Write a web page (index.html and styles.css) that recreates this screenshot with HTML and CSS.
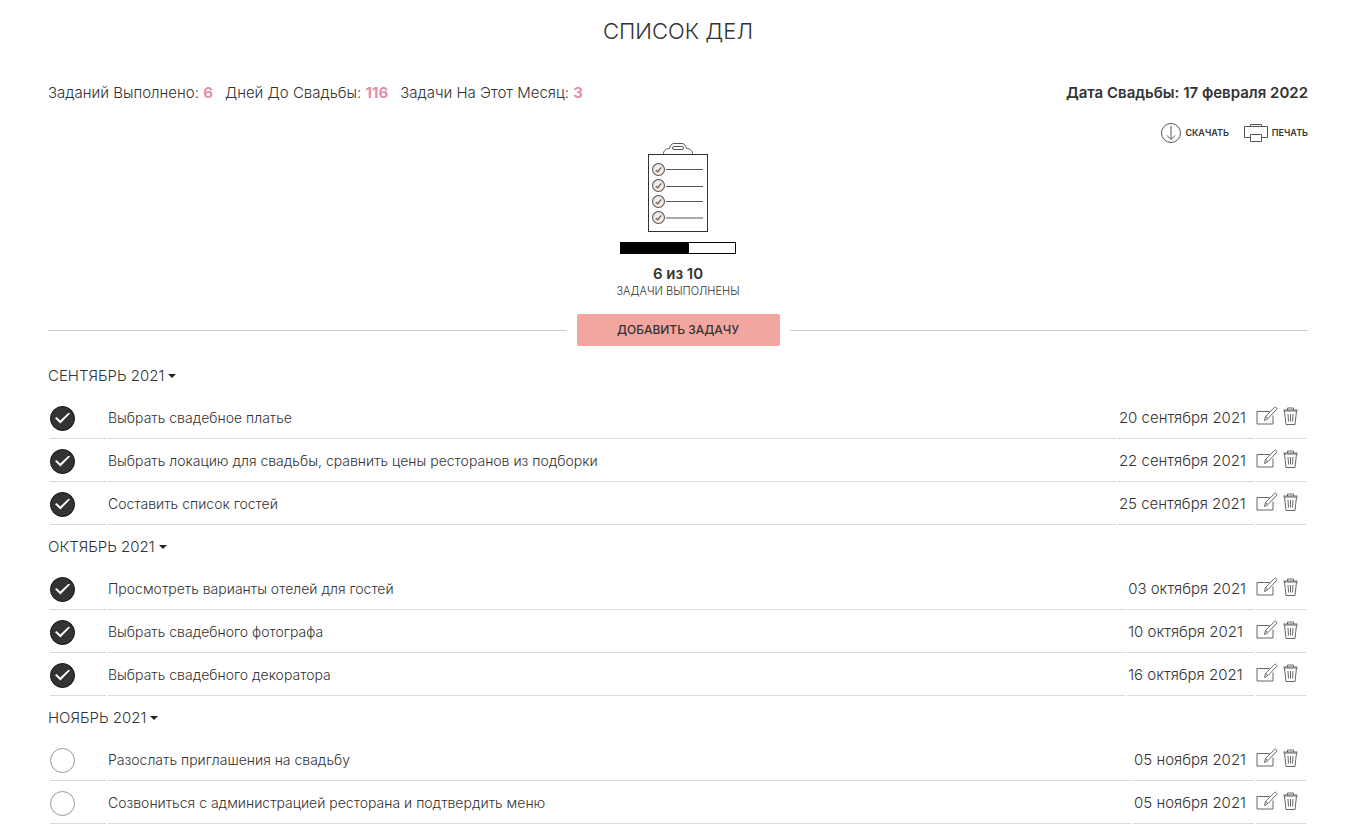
FILE: index.html
```html
<!DOCTYPE html>
<html lang="ru">
<head>
    <meta charset="UTF-8">
    <meta name="viewport" content="width=device-width, initial-scale=1.0">
    <title>Список дел</title>
    <link rel="stylesheet" href="styles.css">
</head>
<body>
    <!-- Shared icons -->
    <svg class="sprite" aria-hidden="true">
        <symbol id="icon-edit" viewBox="0 0 22 20">
            <path d="M13.500 5.500H1v12.500h16V9.500M8.500 14.500l1-4L18 1.800c.7-.7 1.700-.7 2.300-.1s.5 1.500-.1 2.200L12 12.500zM9.500 10.500l2.500 2"/>
        </symbol>
        <symbol id="icon-trash" viewBox="0 0 15 18">
            <path d="M.5 4h14M.5 3h14M4.500 3V1h6v2M1.500 4l1.500 13.500h9L13.500 4M5 7l.5 7.500M7.500 7v7.500M10 7l-.5 7.500"/>
        </symbol>
        <symbol id="icon-item" viewBox="0 0 12 12">
            <circle cx="6" cy="6" r="5.500"/>
            <path d="M3.500 6.500l1.700 1.700 3.300-4.200"/>
        </symbol>
    </svg>

    <div class="page">
        <h1>СПИСОК ДЕЛ</h1>

        <div class="summary">
            <div class="stats">
                <span>Заданий Выполнено: <b>6</b></span>
                <span>Дней До Свадьбы: <b>116</b></span>
                <span>Задачи На Этот Месяц: <b>3</b></span>
            </div>
            <div class="wedding">
                <div class="wedding-date">Дата Свадьбы: 17 февраля 2022</div>
                <div class="links">
                    <a href="#">
                        <svg width="20" height="20" viewBox="0 0 20 20"><circle cx="10" cy="10" r="9.500"/><path d="M10 3v13M6 12.500l4 4 4-4"/></svg>
                        СКАЧАТЬ
                    </a>
                    <a href="#">
                        <svg width="24" height="20" viewBox="0 0 24 20"><path d="M6.500 14.500h-6v-11h23v11h-6M6.500 3.500v-2h11v2M6.500 11.500h11v7h-11z"/></svg>
                        ПЕЧАТЬ
                    </a>
                </div>
            </div>
        </div>

        <div class="progress-block">
            <svg class="clipboard" width="60" height="90" viewBox="0 0 60 90">
                <path d="M15.500 11c0-4 3-5.500 6-5.500C22 2.500 24 .5 26 .5h8c2 0 4 2 4.500 5 3 0 6 1.500 6 5.500"/>
                <rect x="24.500" y="3.500" width="11" height="3" rx="1.500"/>
                <rect class="sheet" x=".5" y="11.500" width="59" height="77"/>
                <path class="lines" d="M18 26.500h37M18 43.500h37M18 58.500h37M18 75h37"/>
                <g class="items">
                    <use href="#icon-item" x="4" y="20" width="13" height="13"/>
                    <use href="#icon-item" x="4" y="36" width="13" height="13"/>
                    <use href="#icon-item" x="4" y="52" width="13" height="13"/>
                    <use href="#icon-item" x="4" y="68" width="13" height="13"/>
                </g>
            </svg>
            <div class="bar"><div class="bar-fill" style="width: 60%"></div></div>
            <div class="count">6 из 10</div>
            <div class="caption">ЗАДАЧИ ВЫПОЛНЕНЫ</div>
        </div>

        <div class="add-row">
            <button class="add-button" type="button">ДОБАВИТЬ ЗАДАЧУ</button>
        </div>

        <section>
            <h2><button class="month" type="button">СЕНТЯБРЬ 2021</button></h2>
            <table>
                <tr>
                    <td class="check"><input type="checkbox" id="t1" checked></td>
                    <td class="task"><label for="t1">Выбрать свадебное платье</label></td>
                    <td class="date">20 сентября 2021</td>
                    <td class="tools">
                        <div>
                            <button type="button" aria-label="Изменить"><svg width="22" height="20"><use href="#icon-edit"/></svg></button>
                            <button type="button" aria-label="Удалить"><svg width="15" height="18"><use href="#icon-trash"/></svg></button>
                        </div>
                    </td>
                </tr>
                <tr>
                    <td class="check"><input type="checkbox" id="t2" checked></td>
                    <td class="task"><label for="t2">Выбрать локацию для свадьбы, сравнить цены ресторанов из подборки</label></td>
                    <td class="date">22 сентября 2021</td>
                    <td class="tools">
                        <div>
                            <button type="button" aria-label="Изменить"><svg width="22" height="20"><use href="#icon-edit"/></svg></button>
                            <button type="button" aria-label="Удалить"><svg width="15" height="18"><use href="#icon-trash"/></svg></button>
                        </div>
                    </td>
                </tr>
                <tr>
                    <td class="check"><input type="checkbox" id="t3" checked></td>
                    <td class="task"><label for="t3">Составить список гостей</label></td>
                    <td class="date">25 сентября 2021</td>
                    <td class="tools">
                        <div>
                            <button type="button" aria-label="Изменить"><svg width="22" height="20"><use href="#icon-edit"/></svg></button>
                            <button type="button" aria-label="Удалить"><svg width="15" height="18"><use href="#icon-trash"/></svg></button>
                        </div>
                    </td>
                </tr>
            </table>
        </section>

        <section>
            <h2><button class="month" type="button">ОКТЯБРЬ 2021</button></h2>
            <table>
                <tr>
                    <td class="check"><input type="checkbox" id="t4" checked></td>
                    <td class="task"><label for="t4">Просмотреть варианты отелей для гостей</label></td>
                    <td class="date">03 октября 2021</td>
                    <td class="tools">
                        <div>
                            <button type="button" aria-label="Изменить"><svg width="22" height="20"><use href="#icon-edit"/></svg></button>
                            <button type="button" aria-label="Удалить"><svg width="15" height="18"><use href="#icon-trash"/></svg></button>
                        </div>
                    </td>
                </tr>
                <tr>
                    <td class="check"><input type="checkbox" id="t5" checked></td>
                    <td class="task"><label for="t5">Выбрать свадебного фотографа</label></td>
                    <td class="date">10 октября 2021</td>
                    <td class="tools">
                        <div>
                            <button type="button" aria-label="Изменить"><svg width="22" height="20"><use href="#icon-edit"/></svg></button>
                            <button type="button" aria-label="Удалить"><svg width="15" height="18"><use href="#icon-trash"/></svg></button>
                        </div>
                    </td>
                </tr>
                <tr>
                    <td class="check"><input type="checkbox" id="t6" checked></td>
                    <td class="task"><label for="t6">Выбрать свадебного декоратора</label></td>
                    <td class="date">16 октября 2021</td>
                    <td class="tools">
                        <div>
                            <button type="button" aria-label="Изменить"><svg width="22" height="20"><use href="#icon-edit"/></svg></button>
                            <button type="button" aria-label="Удалить"><svg width="15" height="18"><use href="#icon-trash"/></svg></button>
                        </div>
                    </td>
                </tr>
            </table>
        </section>

        <section>
            <h2><button class="month" type="button">НОЯБРЬ 2021</button></h2>
            <table>
                <tr>
                    <td class="check"><input type="checkbox" id="t7"></td>
                    <td class="task"><label for="t7">Разослать приглашения на свадьбу</label></td>
                    <td class="date">05 ноября 2021</td>
                    <td class="tools">
                        <div>
                            <button type="button" aria-label="Изменить"><svg width="22" height="20"><use href="#icon-edit"/></svg></button>
                            <button type="button" aria-label="Удалить"><svg width="15" height="18"><use href="#icon-trash"/></svg></button>
                        </div>
                    </td>
                </tr>
                <tr>
                    <td class="check"><input type="checkbox" id="t8"></td>
                    <td class="task"><label for="t8">Созвониться с администрацией ресторана и подтвердить меню</label></td>
                    <td class="date">05 ноября 2021</td>
                    <td class="tools">
                        <div>
                            <button type="button" aria-label="Изменить"><svg width="22" height="20"><use href="#icon-edit"/></svg></button>
                            <button type="button" aria-label="Удалить"><svg width="15" height="18"><use href="#icon-trash"/></svg></button>
                        </div>
                    </td>
                </tr>
            </table>
        </section>
    </div>
</body>
</html>
```
FILE: styles.css
```css
* {
    box-sizing: border-box;
}

body {
    margin: 0;
    background: white;
    color: #333;
    font-family: Inter, "Open Sans", sans-serif;
    font-size: 15px;
    font-weight: 300;
    line-height: 20px;
}

button {
    padding: 0;
    border: none;
    background: none;
    color: inherit;
    font: inherit;
    cursor: pointer;
}

svg {
    display: block;
    fill: none;
    stroke: #555;
}

.sprite {
    position: absolute;
    width: 0;
    height: 0;
}

.page {
    padding: 16px 42px 0 48px;
}

h1 {
    margin: 0 0 37px;
    font-size: 22px;
    font-weight: 300;
    line-height: 30px;
    text-align: center;
}

.summary {
    display: flex;
    justify-content: space-between;
}

.stats {
    display: flex;
    gap: 12px;
}

.stats b {
    color: #e28fab;
    font-weight: 700;
}

.wedding-date {
    margin-bottom: 20px;
    font-weight: 600;
    text-align: right;
}

.links {
    display: flex;
    justify-content: flex-end;
    gap: 15px;
}

.links a {
    display: flex;
    align-items: center;
    gap: 4px;
    color: #333;
    font-size: 9px;
    font-weight: 600;
    text-decoration: none;
}

/* Progress */
.progress-block {
    display: flex;
    flex-direction: column;
    align-items: center;
}

.clipboard .sheet {
    fill: white;
    stroke: #333;
}

.clipboard .items {
    fill: #f5e9e4;
}

.bar {
    width: 116px;
    height: 12px;
    margin: 9px 0 10px;
    border: 1px solid black;
}

.bar-fill {
    height: 100%;
    background: black;
}

.count {
    font-weight: 600;
}

.caption {
    font-size: 11px;
    line-height: 14px;
}

.add-row {
    display: flex;
    align-items: center;
    gap: 10px;
    margin: 16px 0 10px;
}

.add-row::before,
.add-row::after {
    content: "";
    flex: 1;
    height: 1px;
    background: #ccc;
}

.add-button {
    width: 203px;
    height: 32px;
    border-radius: 2px;
    background: #f3a6a0;
    font-size: 12px;
    font-weight: 500;
}

/* Task lists */
h2 {
    margin: 0;
    font-size: 15px;
    font-weight: 300;
    line-height: 40px;
}

.month {
    display: flex;
    align-items: center;
    gap: 4px;
}

.month::after {
    content: "";
    border: 4px solid transparent;
    border-top-color: #222;
    border-bottom: none;
}

table {
    width: 100%;
    border-spacing: 2px;
}

td {
    height: 41px;
    padding: 0;
    border-bottom: 1px solid #d9d9d9;
}

.check {
    width: 56px;
}

.check input {
    appearance: none;
    display: flex;
    align-items: center;
    justify-content: center;
    width: 25px;
    height: 25px;
    margin: 0;
    border: 1px solid #999;
    border-radius: 50%;
    cursor: pointer;
}

.check input:checked {
    border-color: #111;
    background: #333;
}

.check input:checked::before {
    content: "";
    width: 15px;
    height: 11px;
    background: white;
    clip-path: polygon(0 52%, 10% 40%, 35% 72%, 92% 0, 100% 10%, 36% 100%);
}

.task {
    font-size: 14px;
}

.date {
    width: 1px;
    padding: 0 8px 0 1px;
    white-space: nowrap;
}

.tools {
    width: 50px;
}

.tools svg {
    stroke: #666;
}

.tools div {
    display: flex;
    align-items: center;
    gap: 5px;
    padding-bottom: 4px;
}
```
